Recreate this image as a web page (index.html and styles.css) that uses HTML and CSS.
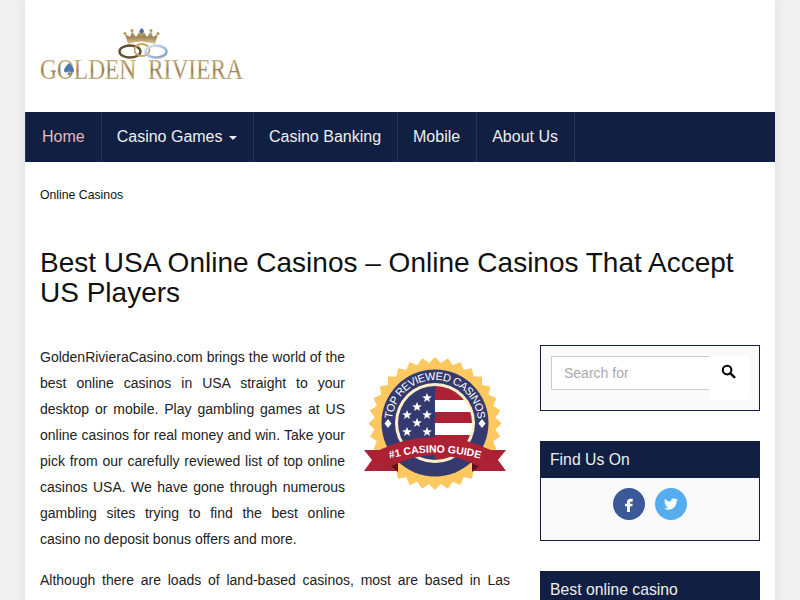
FILE: index.html
```html
<!DOCTYPE html>
<html lang="en">
<head>
  <meta charset="UTF-8" />
  <meta name="viewport" content="width=device-width, initial-scale=1" />
  <title>Best USA Online Casinos</title>
  <link rel="stylesheet" href="styles.css">
</head>
<body>
  <div class="wrap">
    <header class="site-header">
      <a class="logo" href="#">
        <svg width="206" height="56" viewBox="0 0 206 56">
          <defs>
            <linearGradient id="gold" x1="0" y1="0" x2="0" y2="1">
              <stop offset="0" stop-color="#e4d5ab"/>
              <stop offset="0.55" stop-color="#9c8150"/>
              <stop offset="1" stop-color="#dcc99a"/>
            </linearGradient>
            <linearGradient id="ice" x1="0" y1="0" x2="1" y2="1">
              <stop offset="0" stop-color="#dbe6ef"/>
              <stop offset="1" stop-color="#7f9fc0"/>
            </linearGradient>
          </defs>
          <!-- crown -->
          <path d="M88 18 L85 8 L90 11 L92 5 L96 11 L101.700 2 L107 11 L111 5 L113 11 L118 8 L115 18 Q101 13 88 18Z" fill="url(#gold)"/>
          <g fill="#b8985a">
            <circle cx="85" cy="7.500" r="1.500"/>
            <circle cx="92" cy="4.500" r="1.500"/>
            <circle cx="111" cy="4.500" r="1.500"/>
            <circle cx="118" cy="7.500" r="1.500"/>
          </g>
          <path d="M101.700 2 l2.500 3 -2.500 3 -2.500 -3z" fill="#4a6aa8"/>
          <!-- rings -->
          <ellipse cx="90" cy="25.500" rx="10.500" ry="6" fill="none" stroke="#5e5030" stroke-width="2.400"/>
          <ellipse cx="102" cy="24" rx="7.500" ry="6" fill="none" stroke="#c4a763" stroke-width="1.800"/>
          <ellipse cx="116" cy="25.500" rx="10.500" ry="6" fill="none" stroke="url(#ice)" stroke-width="2.600"/>
          <text x="0" y="53" class="logo-text" fill="url(#gold)" textLength="203" lengthAdjust="spacingAndGlyphs">GOLDEN  RIVIERA</text>
          <path d="M29 37 c2.500 3 5 5 5 7.500 c0 2.500 -3.500 2.500 -4.500 .5 c0 2 .3 3 1.200 4 h-3.400 c.9 -1 1.200 -2 1.200 -4 c-1 2 -4.500 2 -4.500 -.5 c0 -2.500 2.500 -4.500 5 -7.500z" fill="#4a78b0"/>
        </svg>
      </a>
    </header>

    <nav class="main-nav">
      <ul>
        <li class="active"><a href="#">Home</a></li>
        <li><a href="#">Casino Games <span class="caret"></span></a></li>
        <li><a href="#">Casino Banking</a></li>
        <li><a href="#">Mobile</a></li>
        <li><a href="#">About Us</a></li>
      </ul>
    </nav>

    <div class="breadcrumb">Online Casinos</div>

    <h1>Best USA Online Casinos – Online Casinos That Accept US Players</h1>

    <div class="columns">
      <main class="content">
        <svg class="badge" width="165" height="165" viewBox="345 345 165 165">
          <defs>
            <rect id="sq" x="388" y="376.500" width="94" height="94"/>
            <polygon id="star" points="0,-5 1.300,-1.700 4.800,-1.500 2,0.700 3,4 0,2.100 -3,4 -2,0.700 -4.800,-1.500 -1.300,-1.700"/>
            <clipPath id="flagclip"><circle cx="435" cy="423" r="37"/></clipPath>
            <path id="ringarc" d="M392 423 A43 43 0 0 1 478 423"/>
            <path id="ribbonarc" d="M385 460 Q435 445 485 460"/>
          </defs>
          <g fill="#fdc860">
            <use href="#sq"/>
            <use href="#sq" transform="rotate(11.250 435 423.500)"/>
            <use href="#sq" transform="rotate(22.500 435 423.500)"/>
            <use href="#sq" transform="rotate(33.750 435 423.500)"/>
            <use href="#sq" transform="rotate(45 435 423.500)"/>
            <use href="#sq" transform="rotate(56.250 435 423.500)"/>
            <use href="#sq" transform="rotate(67.500 435 423.500)"/>
            <use href="#sq" transform="rotate(78.750 435 423.500)"/>
          </g>
          <circle cx="435" cy="423" r="53.500" fill="#343a70"/>
          <circle cx="435" cy="423" r="40" fill="#fdf0c8"/>
          <g clip-path="url(#flagclip)">
            <rect x="398" y="386" width="37" height="74" fill="#343a70"/>
            <rect x="435" y="386" width="37" height="74" fill="#ffffff"/>
            <rect x="435" y="386" width="37" height="14" fill="#ad2135"/>
            <rect x="435" y="412" width="37" height="11" fill="#ad2135"/>
            <rect x="435" y="435" width="37" height="25" fill="#ad2135"/>
          </g>
          <g fill="#ffffff">
            <use href="#star" x="427" y="398"/>
            <use href="#star" x="417" y="407"/>
            <use href="#star" x="407" y="415"/>
            <use href="#star" x="427" y="415"/>
            <use href="#star" x="417" y="423"/>
            <use href="#star" x="407" y="432"/>
            <use href="#star" x="427" y="432"/>
            <path d="M388 419 l3.500 4.500 -3.500 4.500 -3.500 -4.500z M482 419 l3.500 4.500 -3.500 4.500 -3.500 -4.500z"/>
          </g>
          <text class="ring-text"><textPath href="#ringarc" startOffset="50%" text-anchor="middle">TOP REVIEWED CASINOS</textPath></text>
          <!-- ribbon -->
          <path d="M364 450 L388 450 L398 471 L364 471 L372 460Z" fill="#ad2135"/>
          <path d="M506 450 L482 450 L472 471 L506 471 L498 460Z" fill="#ad2135"/>
          <path d="M391 466 L398 472 L398 461Z M479 466 L472 472 L472 461Z" fill="#5e0f1a"/>
          <path d="M377 451 Q435 423 493 451 L478 466 Q435 444 392 466Z" fill="#ad2135"/>
          <text class="ribbon-text"><textPath href="#ribbonarc" startOffset="50%" text-anchor="middle">#1 CASINO GUIDE</textPath></text>
        </svg>
        <p>GoldenRivieraCasino.com brings the world of the best online casinos in USA straight to your desktop or mobile. Play gambling games at US online casinos for real money and win. Take your pick from our carefully reviewed list of top online casinos USA. We have gone through numerous gambling sites trying to find the best online casino no deposit bonus offers and more.</p>
        <p>Although there are loads of land-based casinos, most are based in Las Vegas or Atlantic City.</p>
      </main>

      <aside class="sidebar">
        <div class="widget search-widget">
          <form class="search-form">
            <input type="text" placeholder="Search for" />
            <button type="button" aria-label="Search">
              <svg width="15" height="15" viewBox="0 0 16 16"><circle cx="6.500" cy="6.500" r="4.600" fill="none" stroke="#000" stroke-width="2.200"/><path d="M10 10l4.200 4" stroke="#000" stroke-width="2.600" stroke-linecap="round"/></svg>
            </button>
          </form>
        </div>

        <div class="widget">
          <h4 class="widget-title">Find Us On</h4>
          <div class="social">
            <a class="fb" href="#"><svg width="16" height="16" viewBox="0 0 24 24"><path fill="#fff" d="M14 8.500h3.500V4h-3.500c-2.900 0-5 2.200-5 5v2.500H6v4h3V24h4.500v-8.500h3.500l.5-4h-4V9.500c0-.6.4-1 1-1z"/></svg></a>
            <a class="tw" href="#"><svg width="14" height="14" viewBox="0 0 24 24"><path fill="#fff" d="M23.953 4.570a10 10 0 01-2.825.775 4.958 4.958 0 002.163-2.723c-.951.555-2.005.959-3.127 1.184a4.920 4.920 0 00-8.384 4.482C7.690 8.095 4.067 6.130 1.640 3.162a4.822 4.822 0 00-.666 2.475c0 1.710.870 3.213 2.188 4.096a4.904 4.904 0 01-2.228-.616v.060a4.923 4.923 0 003.946 4.827 4.996 4.996 0 01-2.212.085 4.936 4.936 0 004.604 3.417 9.867 9.867 0 01-6.102 2.105c-.390 0-.779-.023-1.170-.067a13.995 13.995 0 007.557 2.209c9.053 0 13.998-7.496 13.998-13.985 0-.210 0-.420-.015-.630A9.935 9.935 0 0024 4.590z"/></svg></a>
          </div>
        </div>

        <div class="widget">
          <h4 class="widget-title">Best online casino</h4>
        </div>
      </aside>
    </div>
  </div>
</body>
</html>
```

FILE: styles.css
```css
html, body {
  margin: 0;
  padding: 0;
}
body {
  font-family: "Liberation Sans", Arial, sans-serif;
  background: #f0f0f0;
  color: #111;
}
.wrap {
  width: 750px;
  margin: 0 auto;
  background: #fff;
  box-shadow: 0 0 10px rgba(0, 0, 0, 0.08);
}
.site-header {
  height: 112px;
  padding: 26px 15px 0;
  box-sizing: border-box;
}
.logo {
  display: block;
  width: 206px;
  height: 56px;
}
.logo svg {
  display: block;
  overflow: visible;
}
.logo-text {
  font-family: "Liberation Serif", serif;
  font-size: 29px;
  white-space: pre;
}

.main-nav {
  background: #111f42;
  height: 50px;
}
.main-nav ul {
  display: flex;
  list-style: none;
  margin: 0;
  padding: 0;
  height: 100%;
}
.main-nav li {
  border-right: 1px solid #26345a;
}
.main-nav li.active {
  border-left: 1px solid #26345a;
}
.main-nav a {
  display: block;
  padding: 0 16px 0 15px;
  line-height: 50px;
  font-size: 16px;
  color: #eee;
  text-decoration: none;
}
.main-nav li.active a {
  padding: 0 16px;
  color: #e6b9bd;
}
.caret {
  display: inline-block;
  vertical-align: middle;
  margin-left: 2px;
  border-top: 4px solid #eee;
  border-left: 4px solid transparent;
  border-right: 4px solid transparent;
}

.breadcrumb {
  padding: 26px 15px 0;
  font-size: 12.25px;
  line-height: 14px;
  color: #111;
}
h1 {
  margin: 46px 15px 0;
  font-size: 28px;
  font-weight: normal;
  line-height: 30px;
  color: #111;
}

.columns {
  display: flex;
  justify-content: space-between;
  padding: 36px 15px 0;
}
.content {
  width: 470px;
  font-size: 14px;
  line-height: 26px;
  color: #222;
  text-align: justify;
}
.content p {
  margin: 0 0 15px;
}
.badge {
  float: right;
  margin: 1px 0 20px 0;
}
.ring-text {
  font-family: "Liberation Sans", Arial, sans-serif;
  font-size: 11px;
  letter-spacing: -0.5px;
  fill: #fff;
}
.ribbon-text {
  font-family: "Liberation Sans", Arial, sans-serif;
  font-size: 10.5px;
  font-weight: bold;
  fill: #fff;
}

.sidebar {
  width: 220px;
  padding-top: 1px;
}
.widget {
  background: #fafafa;
  border: 1px solid #111f42;
  margin-bottom: 30px;
}
.search-widget {
  height: 66px;
  box-sizing: border-box;
  padding: 10px;
}
.search-form {
  display: flex;
  align-items: flex-start;
}
.search-form input {
  width: 158px;
  height: 34px;
  box-sizing: border-box;
  padding: 0 12px;
  border: 1px solid #ccc;
  border-right: none;
  background: #fff;
  font-family: inherit;
  font-size: 14px;
  outline: none;
}
.search-form input::placeholder {
  color: #aaa;
}
.search-form button {
  width: 40px;
  height: 44px;
  background: #fff;
  border: none;
  border-radius: 0 3px 3px 0;
  display: flex;
  justify-content: center;
  padding: 8px 1px 0 0;
  box-sizing: border-box;
}
.widget-title {
  margin: 0;
  background: #111f42;
  color: #eee;
  font-size: 15.75px;
  font-weight: normal;
  line-height: 36px;
  padding: 0 9px;
}
.social {
  display: flex;
  justify-content: center;
  gap: 10px;
  height: 62px;
  padding-top: 10px;
  box-sizing: border-box;
}
.social a {
  width: 32px;
  height: 32px;
  border-radius: 50%;
  display: flex;
  align-items: center;
  justify-content: center;
}
.social .fb {
  background: #3b5998;
}
.social .tw {
  background: #55acee;
}
```
